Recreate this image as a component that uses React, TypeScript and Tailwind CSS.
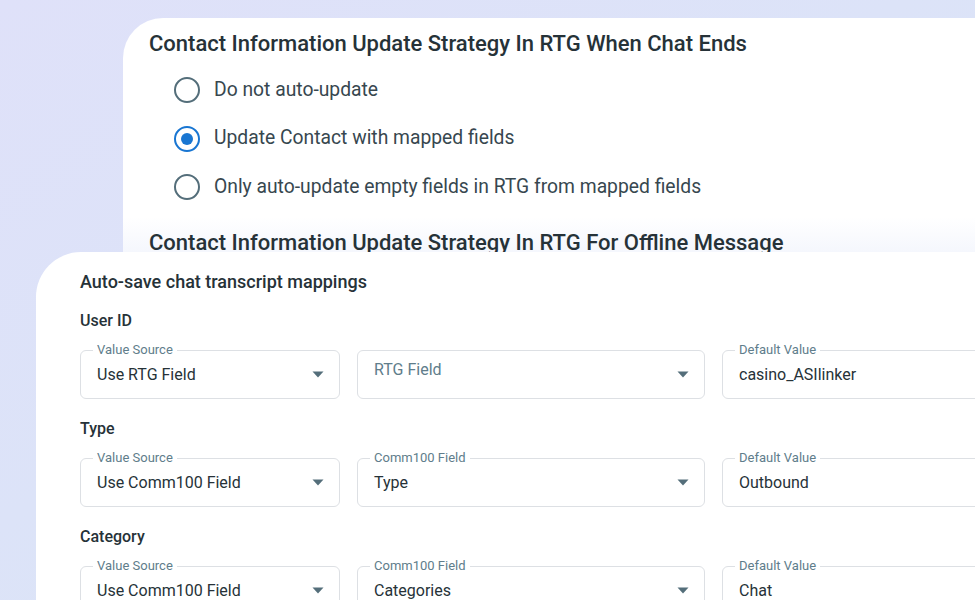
const radios = [
  { label: "Do not auto-update", checked: false },
  { label: "Update Contact with mapped fields", checked: true },
  { label: "Only auto-update empty fields in RTG from mapped fields", checked: false },
];

interface Field {
  legend?: string;
  value: string;
  placeholder?: boolean;
  select?: boolean;
  width: string;
}

interface Mapping {
  name: string;
  fields: Field[];
}

const mappings: Mapping[] = [
  {
    name: "User ID",
    fields: [
      { legend: "Value Source", value: "Use RTG Field", select: true, width: "w-[260px]" },
      { value: "RTG Field", placeholder: true, select: true, width: "w-[348px]" },
      { legend: "Default Value", value: "casino_ASIlinker", width: "w-[348px]" },
    ],
  },
  {
    name: "Type",
    fields: [
      { legend: "Value Source", value: "Use Comm100 Field", select: true, width: "w-[260px]" },
      { legend: "Comm100 Field", value: "Type", select: true, width: "w-[348px]" },
      { legend: "Default Value", value: "Outbound", width: "w-[348px]" },
    ],
  },
  {
    name: "Category",
    fields: [
      { legend: "Value Source", value: "Use Comm100 Field", select: true, width: "w-[260px]" },
      { legend: "Comm100 Field", value: "Categories", select: true, width: "w-[348px]" },
      { legend: "Default Value", value: "Chat", width: "w-[348px]" },
    ],
  },
];

function Radio({ checked }: { checked: boolean }) {
  return (
    <span
      className={
        checked
          ? "flex h-[26px] w-[26px] shrink-0 items-center justify-center rounded-full border-[2.5px] border-[#1976d2]"
          : "flex h-[26px] w-[26px] shrink-0 items-center justify-center rounded-full border-[2.5px] border-[#546e7a]"
      }
    >
      {checked && <span className="h-[12px] w-[12px] rounded-full bg-[#1976d2]" />}
    </span>
  );
}

function Caret() {
  return (
    <svg width="12" height="7" viewBox="0 0 12 7" className="shrink-0">
      <path d="M0.5 0.5 L11.5 0.5 L6 6.5 Z" fill="#546e7a" />
    </svg>
  );
}

function MappingField({ field }: { field: Field }) {
  return (
    <div className={`relative flex h-[49px] shrink-0 items-center rounded-[6px] border border-[#dde0e4] pl-4 pr-[15px] ${field.width}`}>
      {field.legend && (
        <span className="absolute -top-[9px] left-3 bg-white px-1 text-[13px] leading-4 text-[#607d8b]">
          {field.legend}
        </span>
      )}
      <span
        className={
          field.placeholder
            ? "-mt-[9px] flex-1 text-[16px] text-[#607d8b]"
            : "flex-1 text-[16px] text-[#263238]"
        }
      >
        {field.value}
      </span>
      {field.select && <Caret />}
    </div>
  );
}

export default function App() {
  return (
    <div
      className="h-[600px] w-[975px] overflow-hidden bg-[linear-gradient(150deg,#dfe1f9_0%,#dce3f8_45%,#dbe6f4_100%)]"
      style={{ fontFamily: "Roboto, 'Noto Sans', sans-serif" }}
    >
      <div className="ml-[123px] mt-[18px] h-[234px] w-[900px] overflow-hidden rounded-tl-[40px] bg-[linear-gradient(180deg,#ffffff_0%,#ffffff_85%,#f5f7fd_100%)] pl-[26px] pt-3">
        <h2 className="text-[22px] font-medium leading-7 text-[#263238]">
          Contact Information Update Strategy In RTG When Chat Ends
        </h2>
        <div className="mt-[8px] pl-[25px]">
          {radios.map((r) => (
            <div key={r.label} className="flex h-[48.5px] items-center gap-[14px]">
              <Radio checked={r.checked} />
              <span className="text-[19.3px] text-[#37474f]">{r.label}</span>
            </div>
          ))}
        </div>
        <h2 className="mt-[17px] text-[22px] font-medium leading-7 text-[#263238]">
          Contact Information Update Strategy In RTG For Offline Message
        </h2>
      </div>

      <div className="ml-[36px] h-[400px] w-[1000px] rounded-tl-[45px] bg-white pl-[44px] pt-[18px]">
        <h3 className="text-[18px] font-medium leading-6 text-[#263238]">Auto-save chat transcript mappings</h3>
        {mappings.map((m, i) => (
          <div key={m.name} className={i === 0 ? "mt-4" : "mt-[19px]"}>
            <p className="text-[16px] font-medium leading-[22px] text-[#263238]">{m.name}</p>
            <div className="mt-[18px] flex gap-[17px]">
              {m.fields.map((f) => (
                <MappingField key={f.legend ?? f.value} field={f} />
              ))}
            </div>
          </div>
        ))}
      </div>
    </div>
  );
}
